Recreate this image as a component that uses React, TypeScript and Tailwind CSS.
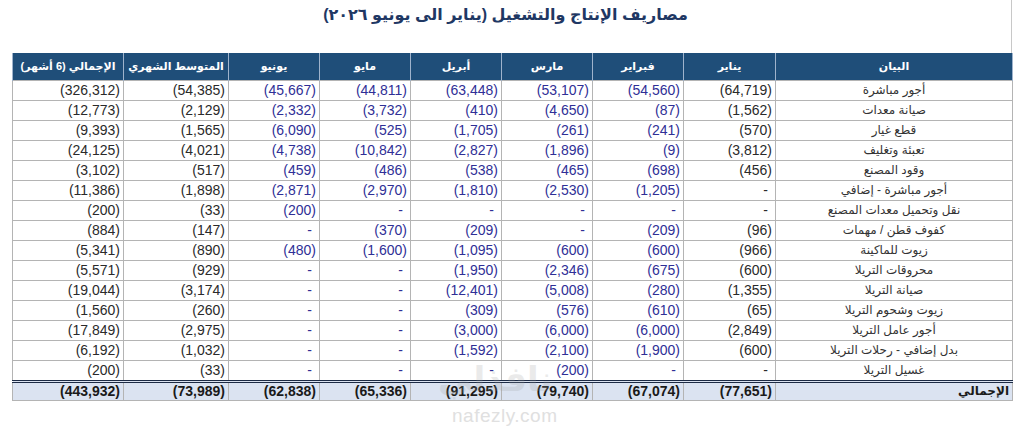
const months = ['يناير', 'فبراير', 'مارس', 'أبريل', 'مايو', 'يونيو']

type Row = { label: string; values: string[] }

// values: jan, feb, mar, apr, may, jun, avg, total
const rows: Row[] = [
  { label: 'أجور مباشرة', values: ['(64,719)', '(54,560)', '(53,107)', '(63,448)', '(44,811)', '(45,667)', '(54,385)', '(326,312)'] },
  { label: 'صيانة معدات', values: ['(1,562)', '(87)', '(4,650)', '(410)', '(3,732)', '(2,332)', '(2,129)', '(12,773)'] },
  { label: 'قطع غيار', values: ['(570)', '(241)', '(261)', '(1,705)', '(525)', '(6,090)', '(1,565)', '(9,393)'] },
  { label: 'تعبئة وتغليف', values: ['(3,812)', '(9)', '(1,896)', '(2,827)', '(10,842)', '(4,738)', '(4,021)', '(24,125)'] },
  { label: 'وقود المصنع', values: ['(456)', '(698)', '(465)', '(538)', '(486)', '(459)', '(517)', '(3,102)'] },
  { label: 'أجور مباشرة - إضافي', values: ['-', '(1,205)', '(2,530)', '(1,810)', '(2,970)', '(2,871)', '(1,898)', '(11,386)'] },
  { label: 'نقل وتحميل معدات المصنع', values: ['-', '-', '-', '-', '-', '(200)', '(33)', '(200)'] },
  { label: 'كفوف قطن / مهمات', values: ['(96)', '(209)', '-', '(209)', '(370)', '-', '(147)', '(884)'] },
  { label: 'زيوت للماكينة', values: ['(966)', '(600)', '(600)', '(1,095)', '(1,600)', '(480)', '(890)', '(5,341)'] },
  { label: 'محروقات التريلا', values: ['(600)', '(675)', '(2,346)', '(1,950)', '-', '-', '(929)', '(5,571)'] },
  { label: 'صيانة التريلا', values: ['(1,355)', '(280)', '(5,008)', '(12,401)', '-', '-', '(3,174)', '(19,044)'] },
  { label: 'زيوت وشحوم التريلا', values: ['(65)', '(610)', '(576)', '(309)', '-', '-', '(260)', '(1,560)'] },
  { label: 'أجور عامل التريلا', values: ['(2,849)', '(6,000)', '(6,000)', '(3,000)', '-', '-', '(2,975)', '(17,849)'] },
  { label: 'بدل إضافي - رحلات التريلا', values: ['(600)', '(1,900)', '(2,100)', '(1,592)', '-', '-', '(1,032)', '(6,192)'] },
  { label: 'غسيل التريلا', values: ['-', '-', '(200)', '-', '-', '-', '(33)', '(200)'] },
]

const totals = ['(77,651)', '(67,074)', '(79,740)', '(91,295)', '(65,336)', '(62,838)', '(73,989)', '(443,932)']

const font = { fontFamily: '"Liberation Sans", "DejaVu Sans", Arial, sans-serif' }

function NumCell({ value, blue }: { value: string; blue: boolean }) {
  const dash = value === '-'
  return (
    <td
      dir="ltr"
      className={`border border-[#b4b4b4] px-[3px] text-right text-[14px] leading-[19px] ${dash ? 'pr-[7px]' : ''} ${
        blue ? 'text-[#2f2f96]' : 'text-[#2a2a2a]'
      }`}
    >
      {value}
    </td>
  )
}

export default function App() {
  return (
    <div className="relative h-[428px] w-[1015px] overflow-hidden bg-white" style={font}>
      <div className="mr-[3px] h-[53px] border-r border-[#c8c8c8] pt-[2px] text-center">
        <h1 dir="rtl" className="text-[16px] font-bold leading-[25px] text-[#1f3864]">
          مصاريف الإنتاج والتشغيل (يناير الى يونيو ٢٠٢٦)
        </h1>
      </div>

      <table dir="rtl" className="ml-[12px] w-[1000px] table-fixed border-collapse">
        <colgroup>
          <col className="w-[237px]" />
          <col className="w-[92px]" />
          <col className="w-[91px]" />
          <col className="w-[91px]" />
          <col className="w-[91px]" />
          <col className="w-[91px]" />
          <col className="w-[91px]" />
          <col className="w-[105px]" />
          <col className="w-[111px]" />
        </colgroup>
        <thead>
          <tr className="h-[27px] bg-[#1f4e79] text-[11px] font-bold text-white">
            <th className="border-x border-[#9fb3cc] font-bold">البيان</th>
            {months.map((m) => (
              <th key={m} className="border-x border-[#9fb3cc] font-bold">
                {m}
              </th>
            ))}
            <th className="border-x border-[#9fb3cc] font-bold">المتوسط الشهري</th>
            <th className="border-x border-[#9fb3cc] font-bold">الإجمالي (6 أشهر)</th>
          </tr>
        </thead>
        <tbody>
          {rows.map((r) => (
            <tr key={r.label} className="h-[20px]">
              <td className="border border-[#b4b4b4] text-center text-[12px] leading-[19px] text-[#333]">{r.label}</td>
              {r.values.map((v, i) => (
                <NumCell key={i} value={v} blue={i >= 1 && i <= 5} />
              ))}
            </tr>
          ))}
          <tr className="h-[19px] border-t-[3px] border-double border-[#1c2a44] bg-[#dbe3f1] font-bold text-[#1a1a1a]">
            <td className="border-x border-b border-[#b4b4b4] pr-[3px] text-right text-[12px] leading-[17px]">الإجمالي</td>
            {totals.map((v, i) => (
              <td
                key={i}
                dir="ltr"
                className="border-x border-b border-[#b4b4b4] px-[3px] text-right text-[14px] leading-[17px]"
              >
                {v}
              </td>
            ))}
          </tr>
        </tbody>
      </table>

      {/* site watermark */}
      <div className="pointer-events-none absolute left-[438px] top-[362px] text-[34px] font-bold leading-none text-[#9a9a9a] opacity-20">
        نافذلي
      </div>
      <div className="pointer-events-none absolute left-[452px] top-[406px] text-[19px] leading-none tracking-[0.5px] text-[#e0e0e0]">
        nafezly.com
      </div>
    </div>
  )
}
